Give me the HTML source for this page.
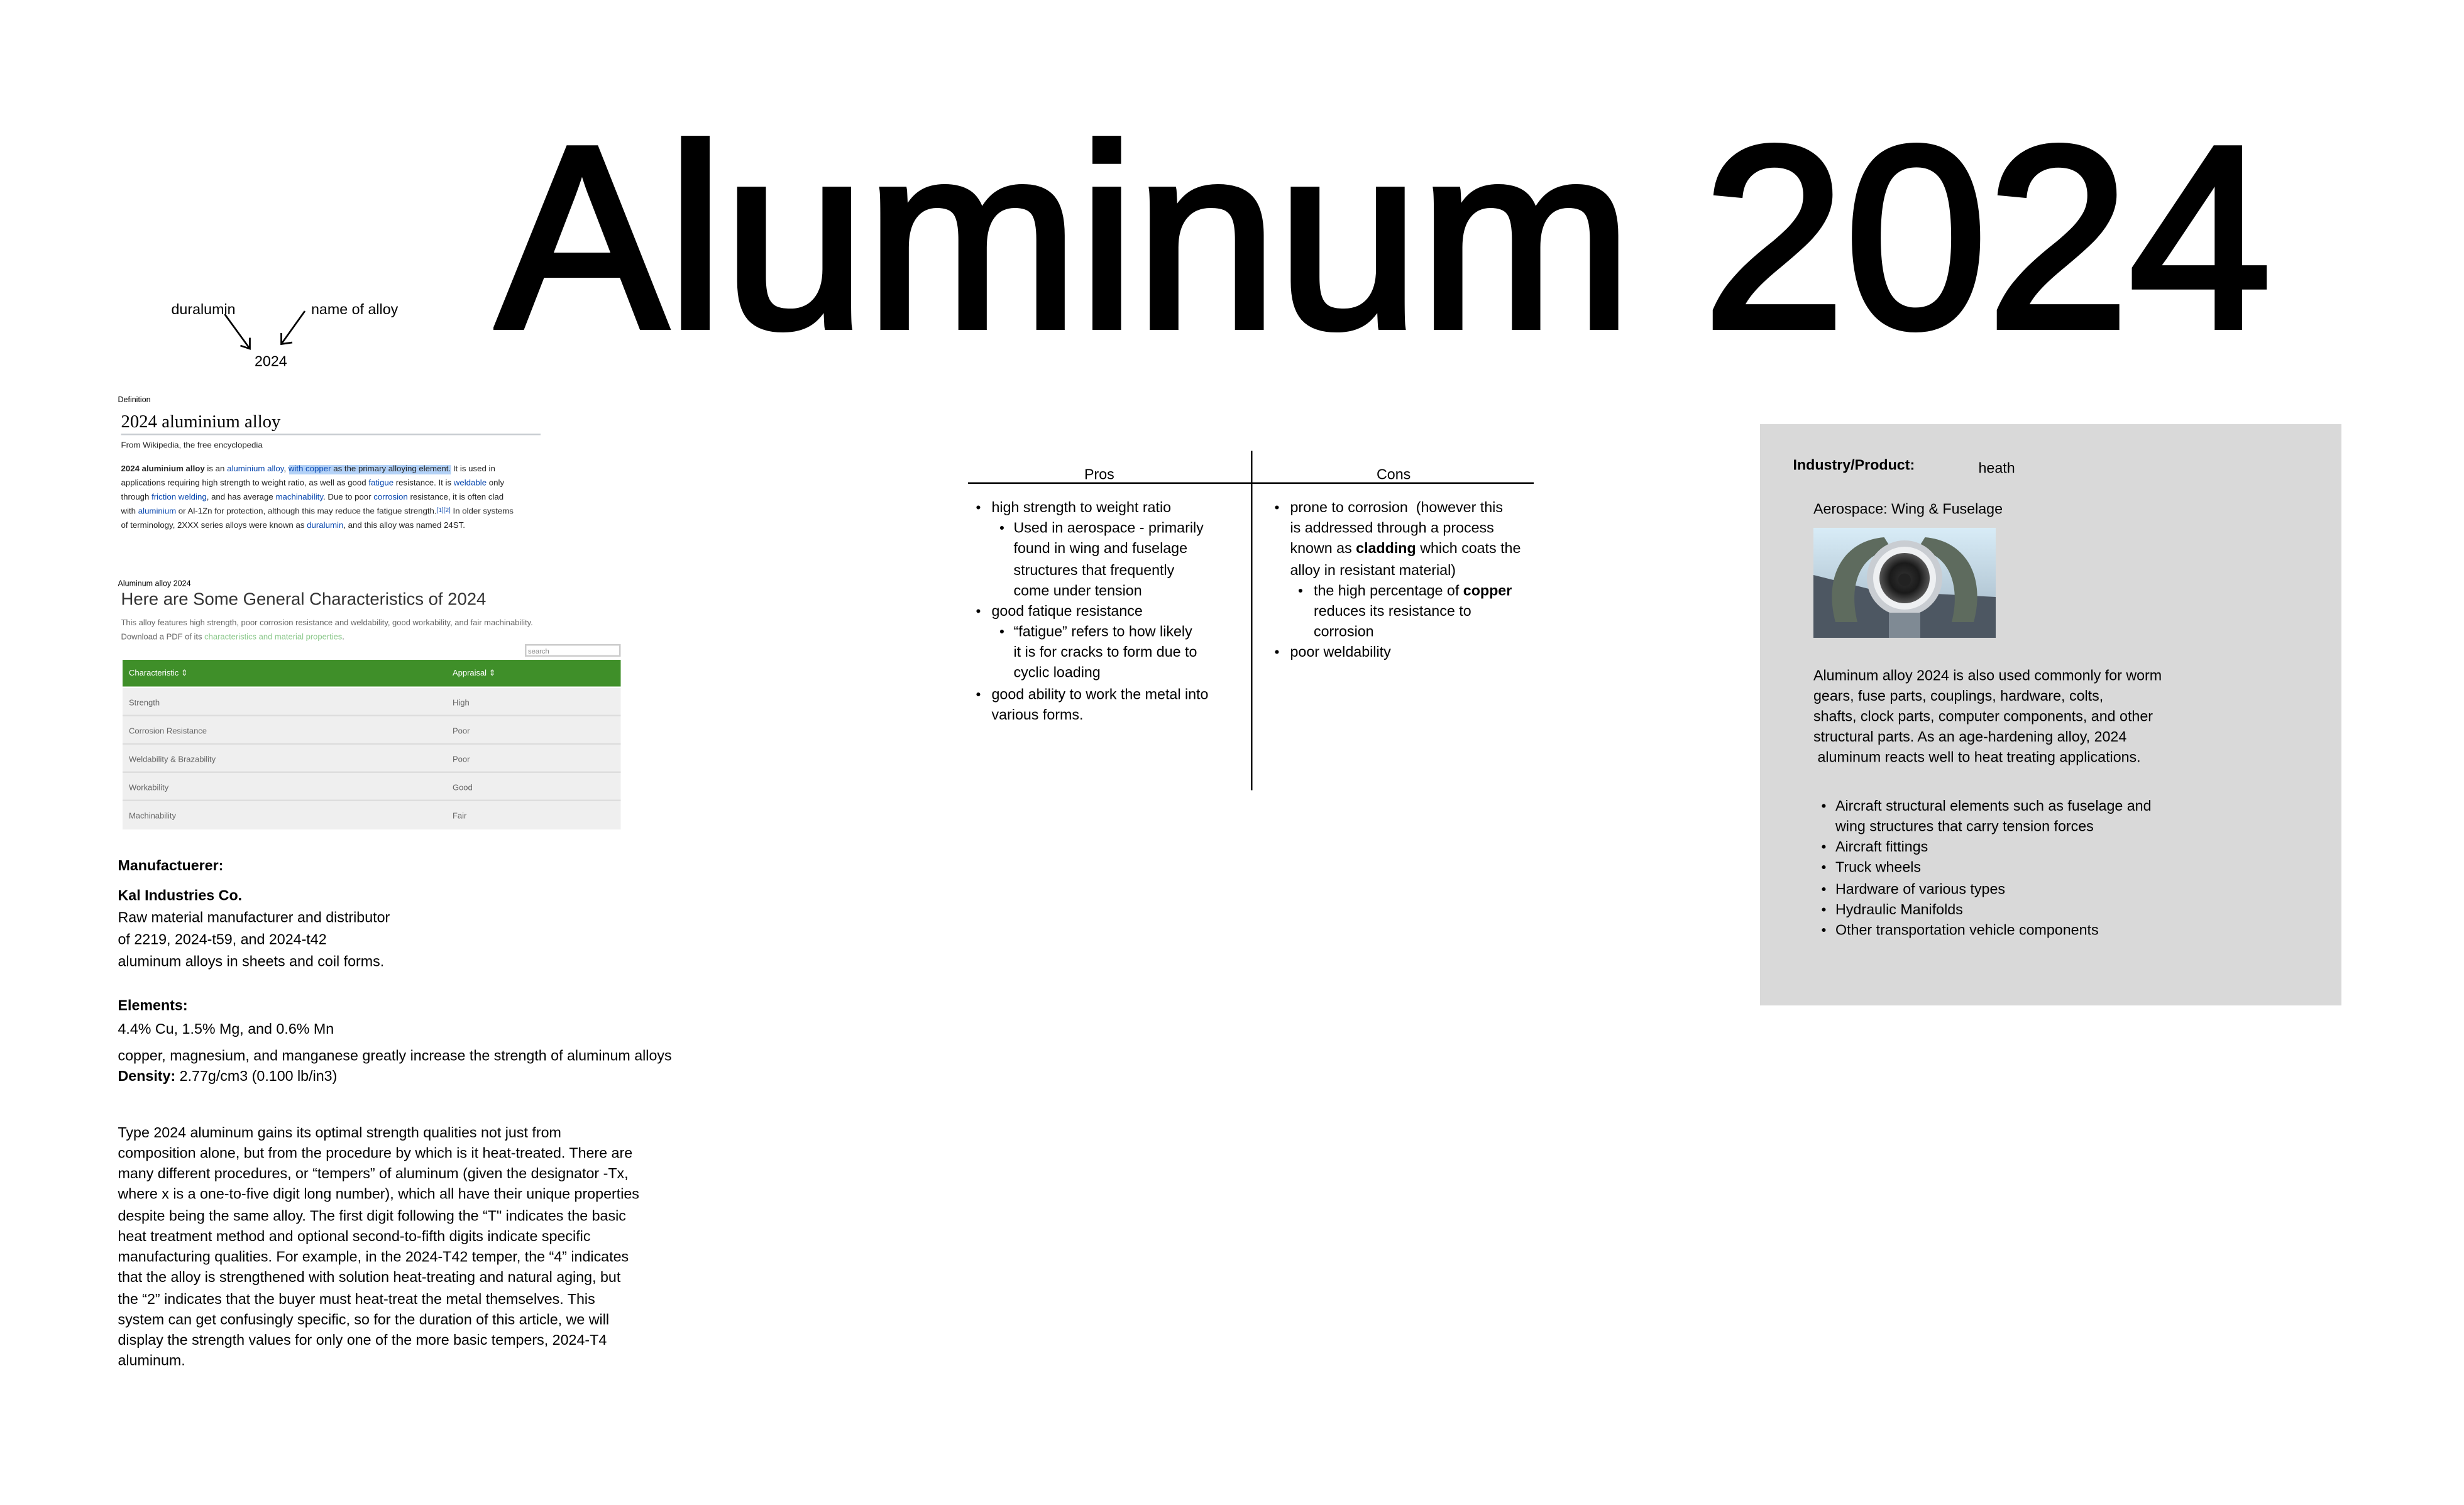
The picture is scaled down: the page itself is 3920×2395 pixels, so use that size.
<!DOCTYPE html>
<html><head><meta charset="utf-8"><style>
html,body{margin:0;padding:0;background:#fff;}
body{width:3920px;height:2395px;overflow:hidden;position:relative;}
#c{position:absolute;left:0;top:0;width:1568px;height:958px;transform:scale(2.5);transform-origin:0 0;font-family:"Liberation Sans",sans-serif;color:#000;}
.t{position:absolute;white-space:nowrap;font-size:9.3px;line-height:12px;}
.b{font-weight:bold;}
.w{position:absolute;white-space:nowrap;font-family:"Liberation Sans",sans-serif;font-size:5.3px;line-height:9px;color:#222;}
.a{color:#0645ad;}
.o{position:absolute;white-space:nowrap;font-size:5.2px;line-height:8px;color:#666;}
.dot{position:absolute;font-size:9px;line-height:12px;}
sup{vertical-align:top;line-height:5px;}
</style></head><body><div id="c">

<div style="position:absolute;left:316px;top:69px;font-size:165px;line-height:165px;white-space:nowrap;-webkit-text-stroke:4px #000;transform:scaleX(0.985);transform-origin:0 0;">Aluminum 2024</div>

<div class="t" style="left:109px;top:191px;">duralumin</div>
<div class="t" style="left:198px;top:191px;">name of alloy</div>
<div class="t" style="left:162px;top:224px;">2024</div>
<svg style="position:absolute;left:0;top:0" width="300" height="260"><g stroke="#000" stroke-width="1.1" fill="none"><path d="M143 200 L159 222 M153 220 L159 222 L159 215"/><path d="M194 198 L179 219 M179 212 L179 219 L186 218"/></g></svg>

<div class="t" style="left:75px;top:251px;font-size:5px;line-height:8px;">Definition</div>
<div style="position:absolute;left:77px;top:262px;font-family:'Liberation Serif',serif;font-size:11.5px;line-height:15px;white-space:nowrap;">2024 aluminium alloy</div>
<div style="position:absolute;left:77px;top:276px;width:267px;height:1px;background:#c8ccd1;"></div>
<div class="w" style="left:77px;top:280px;">From Wikipedia, the free encyclopedia</div>
<div class="w" style="left:77px;top:295px;"><b>2024 aluminium alloy</b> is an <span class="a">aluminium alloy</span>, <span style="background:#b4d2f7"><span class="a">with copper</span> as the primary alloying element.</span> It is used in</div>
<div class="w" style="left:77px;top:304px;">applications requiring high strength to weight ratio, as well as good <span class="a">fatigue</span> resistance. It is <span class="a">weldable</span> only</div>
<div class="w" style="left:77px;top:313px;">through <span class="a">friction welding</span>, and has average <span class="a">machinability</span>. Due to poor <span class="a">corrosion</span> resistance, it is often clad</div>
<div class="w" style="left:77px;top:322px;">with <span class="a">aluminium</span> or Al-1Zn for protection, although this may reduce the fatigue strength.<sup class="a" style="font-size:4px">[1][2]</sup> In older systems</div>
<div class="w" style="left:77px;top:331px;">of terminology, 2XXX series alloys were known as <span class="a">duralumin</span>, and this alloy was named 24ST.</div>

<div class="t" style="left:75px;top:368px;font-size:5px;line-height:8px;">Aluminum alloy 2024</div>
<div style="position:absolute;left:77px;top:375px;font-size:11px;line-height:15px;color:#333;white-space:nowrap;">Here are Some General Characteristics of 2024</div>
<div class="o" style="left:77px;top:393px;">This alloy features high strength, poor corrosion resistance and weldability, good workability, and fair machinability.</div>
<div class="o" style="left:77px;top:402px;">Download a PDF of its <span style="color:#8bc88b">characteristics and material properties</span>.</div>
<div style="position:absolute;left:334px;top:410px;width:61px;height:8px;border:0.5px solid #ccc;font-size:4.5px;line-height:8px;color:#888;padding-left:1px;box-sizing:border-box;">search</div>
<div style="position:absolute;left:78px;top:420px;width:317px;height:17px;background:#3f8f29;"></div>
<div class="o" style="left:82px;top:425px;color:#fff;">Characteristic ⇕</div>
<div class="o" style="left:288px;top:425px;color:#fff;">Appraisal ⇕</div>
<div style="position:absolute;left:78px;top:438px;width:317px;height:90px;background:#efefef;"></div>
<div style="position:absolute;left:78px;top:455px;width:317px;height:1px;background:#ddd;"></div>
<div style="position:absolute;left:78px;top:473px;width:317px;height:1px;background:#ddd;"></div>
<div style="position:absolute;left:78px;top:491px;width:317px;height:1px;background:#ddd;"></div>
<div style="position:absolute;left:78px;top:509px;width:317px;height:1px;background:#ddd;"></div>
<div class="o" style="left:82px;top:444px;">Strength</div><div class="o" style="left:288px;top:444px;">High</div>
<div class="o" style="left:82px;top:462px;">Corrosion Resistance</div><div class="o" style="left:288px;top:462px;">Poor</div>
<div class="o" style="left:82px;top:480px;">Weldability &amp; Brazability</div><div class="o" style="left:288px;top:480px;">Poor</div>
<div class="o" style="left:82px;top:498px;">Workability</div><div class="o" style="left:288px;top:498px;">Good</div>
<div class="o" style="left:82px;top:516px;">Machinability</div><div class="o" style="left:288px;top:516px;">Fair</div>

<div class="t b" style="left:75px;top:545px;">Manufactuerer:</div>
<div class="t b" style="left:75px;top:564px;">Kal Industries Co.</div>
<div class="t" style="left:75px;top:578px;">Raw material manufacturer and distributor</div>
<div class="t" style="left:75px;top:592px;">of 2219, 2024-t59, and 2024-t42</div>
<div class="t" style="left:75px;top:606px;">aluminum alloys in sheets and coil forms.</div>
<div class="t b" style="left:75px;top:634px;">Elements:</div>
<div class="t" style="left:75px;top:649px;">4.4% Cu, 1.5% Mg, and 0.6% Mn</div>
<div class="t" style="left:75px;top:666px;">copper, magnesium, and manganese greatly increase the strength of aluminum alloys</div>
<div class="t" style="left:75px;top:679px;"><b>Density:</b> 2.77g/cm3 (0.100 lb/in3)</div>

<div class="t" style="left:75px;top:715px;">Type 2024 aluminum gains its optimal strength qualities not just from</div>
<div class="t" style="left:75px;top:728px;">composition alone, but from the procedure by which is it heat-treated. There are</div>
<div class="t" style="left:75px;top:741px;">many different procedures, or “tempers” of aluminum (given the designator -Tx,</div>
<div class="t" style="left:75px;top:754px;">where x is a one-to-five digit long number), which all have their unique properties</div>
<div class="t" style="left:75px;top:768px;">despite being the same alloy. The first digit following the “T" indicates the basic</div>
<div class="t" style="left:75px;top:781px;">heat treatment method and optional second-to-fifth digits indicate specific</div>
<div class="t" style="left:75px;top:794px;">manufacturing qualities. For example, in the 2024-T42 temper, the “4” indicates</div>
<div class="t" style="left:75px;top:807px;">that the alloy is strengthened with solution heat-treating and natural aging, but</div>
<div class="t" style="left:75px;top:821px;">the “2” indicates that the buyer must heat-treat the metal themselves. This</div>
<div class="t" style="left:75px;top:834px;">system can get confusingly specific, so for the duration of this article, we will</div>
<div class="t" style="left:75px;top:847px;">display the strength values for only one of the more basic tempers, 2024-T4</div>
<div class="t" style="left:75px;top:860px;">aluminum.</div>

<div style="position:absolute;left:616px;top:307px;width:360px;height:1px;background:#000;"></div>
<div style="position:absolute;left:796px;top:287px;width:1px;height:216px;background:#000;"></div>
<div class="t" style="left:690px;top:296px;">Pros</div>
<div class="t" style="left:876px;top:296px;">Cons</div>

<div class="dot" style="left:621px;top:317px;">•</div>
<div class="t" style="left:631px;top:317px;">high strength to weight ratio</div>
<div class="dot" style="left:636px;top:330px;">•</div>
<div class="t" style="left:645px;top:330px;">Used in aerospace - primarily</div>
<div class="t" style="left:645px;top:343px;">found in wing and fuselage</div>
<div class="t" style="left:645px;top:357px;">structures that frequently</div>
<div class="t" style="left:645px;top:370px;">come under tension</div>
<div class="dot" style="left:621px;top:383px;">•</div>
<div class="t" style="left:631px;top:383px;">good fatique resistance</div>
<div class="dot" style="left:636px;top:396px;">•</div>
<div class="t" style="left:645px;top:396px;">“fatigue” refers to how likely</div>
<div class="t" style="left:645px;top:409px;">it is for cracks to form due to</div>
<div class="t" style="left:645px;top:422px;">cyclic loading</div>
<div class="dot" style="left:621px;top:436px;">•</div>
<div class="t" style="left:631px;top:436px;">good ability to work the metal into</div>
<div class="t" style="left:631px;top:449px;">various forms.</div>

<div class="dot" style="left:811px;top:317px;">•</div>
<div class="t" style="left:821px;top:317px;">prone to corrosion&nbsp; (however this</div>
<div class="t" style="left:821px;top:330px;">is addressed through a process</div>
<div class="t" style="left:821px;top:343px;">known as <b>cladding</b> which coats the</div>
<div class="t" style="left:821px;top:357px;">alloy in resistant material)</div>
<div class="dot" style="left:826px;top:370px;">•</div>
<div class="t" style="left:836px;top:370px;">the high percentage of <b>copper</b></div>
<div class="t" style="left:836px;top:383px;">reduces its resistance to</div>
<div class="t" style="left:836px;top:396px;">corrosion</div>
<div class="dot" style="left:811px;top:409px;">•</div>
<div class="t" style="left:821px;top:409px;">poor weldability</div>

<div style="position:absolute;left:1120px;top:270px;width:370px;height:370px;background:#d9d9d9;"></div>
<div class="t b" style="left:1141px;top:290px;">Industry/Product:</div>
<div class="t" style="left:1259px;top:292px;">heath</div>
<div class="t" style="left:1154px;top:318px;">Aerospace: Wing &amp; Fuselage</div>
<svg style="position:absolute;left:1154px;top:336px" width="116" height="70" viewBox="0 0 116 70">
<defs><linearGradient id="sky" x1="0" y1="0" x2="0" y2="1"><stop offset="0" stop-color="#d8ecf7"/><stop offset="1" stop-color="#9fb3c2"/></linearGradient>
<radialGradient id="fan"><stop offset="0" stop-color="#333"/><stop offset=".6" stop-color="#1a1a1a"/><stop offset="1" stop-color="#555"/></radialGradient></defs>
<rect width="116" height="70" fill="url(#sky)"/>
<path d="M0 30 L40 40 L116 44 L116 70 L0 70Z" fill="#4d5762"/>
<path d="M14 60 C6 30 20 8 45 6 L50 14 C30 16 22 36 28 60Z" fill="#5e6b5e"/>
<path d="M102 60 C110 30 96 8 71 6 L66 14 C86 16 94 36 88 60Z" fill="#5e6b5e"/>
<circle cx="58" cy="32" r="24" fill="#c9cdd2"/>
<circle cx="58" cy="32" r="20" fill="#eef0f2"/>
<circle cx="58" cy="32" r="16" fill="url(#fan)"/>
<circle cx="58" cy="33" r="4" fill="#222"/>
<rect x="48" y="54" width="20" height="16" fill="#7f8a94"/>
</svg>
<div class="t" style="left:1154px;top:424px;">Aluminum alloy 2024 is also used commonly for worm</div>
<div class="t" style="left:1154px;top:437px;">gears, fuse parts, couplings, hardware, colts,</div>
<div class="t" style="left:1154px;top:450px;">shafts, clock parts, computer components, and other</div>
<div class="t" style="left:1154px;top:463px;">structural parts. As an age-hardening alloy, 2024</div>
<div class="t" style="left:1154px;top:476px;">&nbsp;aluminum reacts well to heat treating applications.</div>

<div class="dot" style="left:1159px;top:507px;">•</div><div class="t" style="left:1168px;top:507px;">Aircraft structural elements such as fuselage and</div>
<div class="t" style="left:1168px;top:520px;">wing structures that carry tension forces</div>
<div class="dot" style="left:1159px;top:533px;">•</div><div class="t" style="left:1168px;top:533px;">Aircraft fittings</div>
<div class="dot" style="left:1159px;top:546px;">•</div><div class="t" style="left:1168px;top:546px;">Truck wheels</div>
<div class="dot" style="left:1159px;top:560px;">•</div><div class="t" style="left:1168px;top:560px;">Hardware of various types</div>
<div class="dot" style="left:1159px;top:573px;">•</div><div class="t" style="left:1168px;top:573px;">Hydraulic Manifolds</div>
<div class="dot" style="left:1159px;top:586px;">•</div><div class="t" style="left:1168px;top:586px;">Other transportation vehicle components</div>

</div></body></html>
